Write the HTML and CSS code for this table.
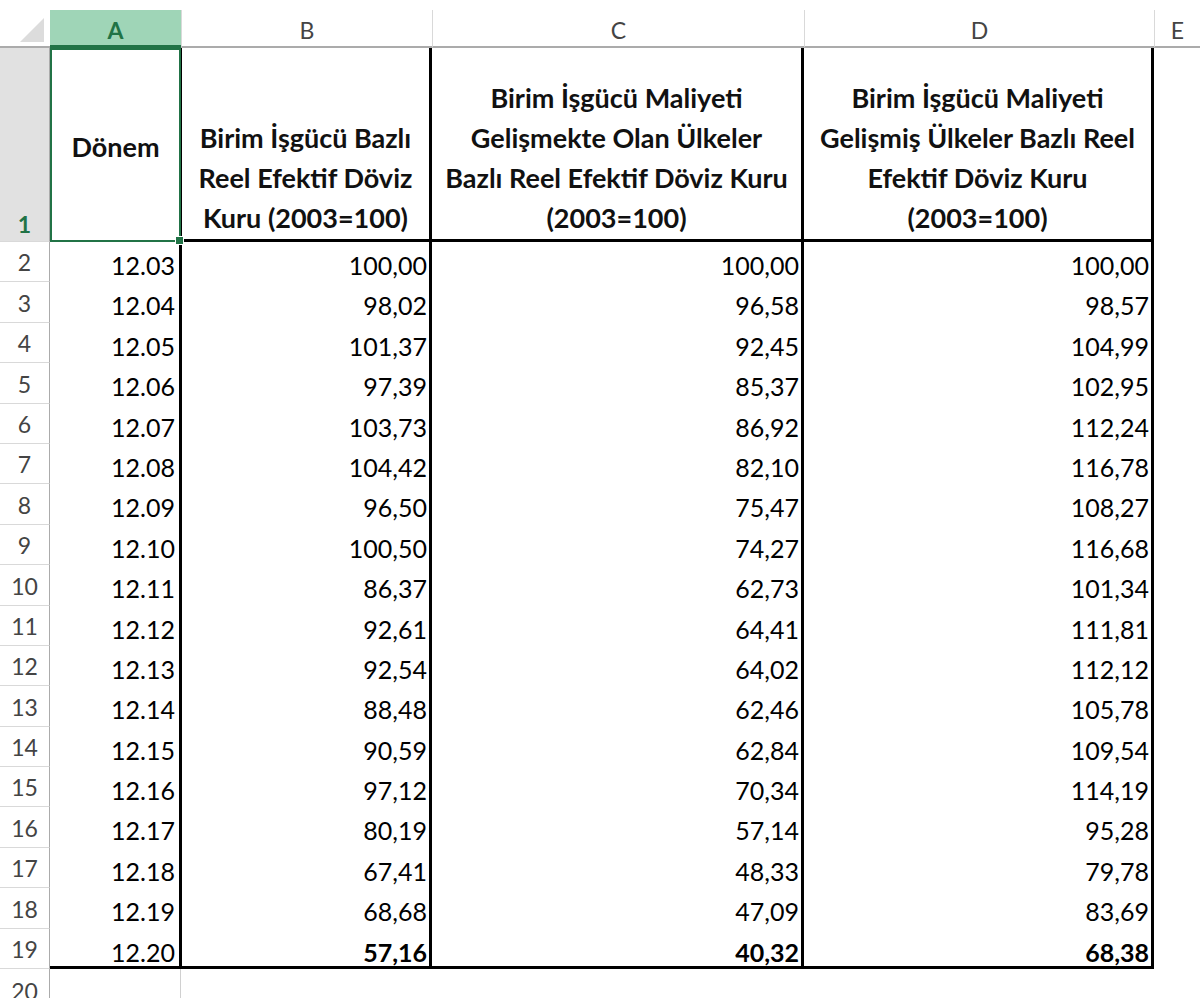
FILE: index.html
```html
<!DOCTYPE html>
<html lang="tr">
<head>
<meta charset="utf-8">
<title>Birim İşgücü Bazlı Reel Efektif Döviz Kuru</title>
<link rel="stylesheet" href="styles.css">
</head>
<body>
<div class="sheet">
  <div class="corner"><div class="tri"></div></div>
  <div class="colhdr sel">A</div>
  <div class="colhdr">B</div>
  <div class="colhdr">C</div>
  <div class="colhdr">D</div>
  <div class="colhdr last">E</div>

  <div class="rowhdr rsel">1</div>
  <div class="hcell a1">Dönem<span class="handle"></span></div>
  <div class="hcell tb">Birim İşgücü Bazlı<br>Reel Efektif Döviz<br>Kuru (2003=100)</div>
  <div class="hcell tc">Birim İşgücü Maliyeti<br>Gelişmekte Olan Ülkeler<br>Bazlı Reel Efektif Döviz Kuru<br>(2003=100)</div>
  <div class="hcell tc">Birim İşgücü Maliyeti<br>Gelişmiş Ülkeler Bazlı Reel<br>Efektif Döviz Kuru<br>(2003=100)</div>
  <div class="ecell"></div>

  <div class="rowhdr">2</div><div class="cell ca">12.03</div><div class="cell cb">100,00</div><div class="cell cc">100,00</div><div class="cell cc">100,00</div><div class="ecell"></div>
  <div class="rowhdr">3</div><div class="cell ca">12.04</div><div class="cell cb">98,02</div><div class="cell cc">96,58</div><div class="cell cc">98,57</div><div class="ecell"></div>
  <div class="rowhdr">4</div><div class="cell ca">12.05</div><div class="cell cb">101,37</div><div class="cell cc">92,45</div><div class="cell cc">104,99</div><div class="ecell"></div>
  <div class="rowhdr">5</div><div class="cell ca">12.06</div><div class="cell cb">97,39</div><div class="cell cc">85,37</div><div class="cell cc">102,95</div><div class="ecell"></div>
  <div class="rowhdr">6</div><div class="cell ca">12.07</div><div class="cell cb">103,73</div><div class="cell cc">86,92</div><div class="cell cc">112,24</div><div class="ecell"></div>
  <div class="rowhdr">7</div><div class="cell ca">12.08</div><div class="cell cb">104,42</div><div class="cell cc">82,10</div><div class="cell cc">116,78</div><div class="ecell"></div>
  <div class="rowhdr">8</div><div class="cell ca">12.09</div><div class="cell cb">96,50</div><div class="cell cc">75,47</div><div class="cell cc">108,27</div><div class="ecell"></div>
  <div class="rowhdr">9</div><div class="cell ca">12.10</div><div class="cell cb">100,50</div><div class="cell cc">74,27</div><div class="cell cc">116,68</div><div class="ecell"></div>
  <div class="rowhdr">10</div><div class="cell ca">12.11</div><div class="cell cb">86,37</div><div class="cell cc">62,73</div><div class="cell cc">101,34</div><div class="ecell"></div>
  <div class="rowhdr">11</div><div class="cell ca">12.12</div><div class="cell cb">92,61</div><div class="cell cc">64,41</div><div class="cell cc">111,81</div><div class="ecell"></div>
  <div class="rowhdr">12</div><div class="cell ca">12.13</div><div class="cell cb">92,54</div><div class="cell cc">64,02</div><div class="cell cc">112,12</div><div class="ecell"></div>
  <div class="rowhdr">13</div><div class="cell ca">12.14</div><div class="cell cb">88,48</div><div class="cell cc">62,46</div><div class="cell cc">105,78</div><div class="ecell"></div>
  <div class="rowhdr">14</div><div class="cell ca">12.15</div><div class="cell cb">90,59</div><div class="cell cc">62,84</div><div class="cell cc">109,54</div><div class="ecell"></div>
  <div class="rowhdr">15</div><div class="cell ca">12.16</div><div class="cell cb">97,12</div><div class="cell cc">70,34</div><div class="cell cc">114,19</div><div class="ecell"></div>
  <div class="rowhdr">16</div><div class="cell ca">12.17</div><div class="cell cb">80,19</div><div class="cell cc">57,14</div><div class="cell cc">95,28</div><div class="ecell"></div>
  <div class="rowhdr">17</div><div class="cell ca">12.18</div><div class="cell cb">67,41</div><div class="cell cc">48,33</div><div class="cell cc">79,78</div><div class="ecell"></div>
  <div class="rowhdr">18</div><div class="cell ca">12.19</div><div class="cell cb">68,68</div><div class="cell cc">47,09</div><div class="cell cc">83,69</div><div class="ecell"></div>
  <div class="rowhdr">19</div><div class="cell ca lastrow">12.20</div><div class="cell cb lastrow bold">57,16</div><div class="cell cc lastrow bold">40,32</div><div class="cell cc lastrow bold">68,38</div><div class="ecell"></div>

  <div class="rowhdr r20">20</div><div class="gcell ga"></div><div class="gcell"></div><div class="gcell"></div><div class="gcell"></div><div class="gcell"></div>
</div>
</body>
</html>
```
FILE: styles.css
```css
html, body {
  margin: 0;
  padding: 0;
  background: #ffffff;
}

body {
  padding-top: 10px;
  font-family: "Lato", "Liberation Sans", sans-serif;
  color: #000;
  overflow: hidden;
}

.sheet {
  display: grid;
  grid-template-columns: 50px 131px 251px 372px 350px 1fr;
  grid-template-rows: 38px 194px repeat(18, 40.4px) 40px;
}

.corner {
  border-bottom: 2px solid #ababab;
  display: flex;
  align-items: flex-end;
  justify-content: flex-end;
  padding: 0 6px 4px 0;
  box-sizing: border-box;
}

.tri {
  width: 24px;
  height: 24px;
  background: #dcdcdc;
  clip-path: polygon(100% 0, 100% 100%, 0 100%);
}

.colhdr {
  box-sizing: border-box;
  border-bottom: 2px solid #ababab;
  border-left: 1px solid #d9d9d9;
  display: flex;
  align-items: center;
  justify-content: center;
  font-size: 23px;
  color: #444;
  padding-top: 4px;
}

.colhdr.sel {
  background: #9fd5b7;
  color: #217346;
  font-weight: bold;
  border-left: none;
  border-bottom: 3px solid #217346;
}

.rowhdr {
  box-sizing: border-box;
  border-right: 1px solid #ababab;
  border-bottom: 1px solid #d9d9d9;
  display: flex;
  align-items: flex-end;
  justify-content: center;
  font-size: 23px;
  color: #444;
  padding-bottom: 5px;
}

.rowhdr.rsel {
  background: #e1e1e1;
  color: #217346;
  font-weight: bold;
  padding-bottom: 3px;
}

.rowhdr.r20 {
  align-items: flex-start;
  padding-bottom: 0;
  padding-top: 8px;
}

.hcell {
  box-sizing: border-box;
  font-weight: bold;
  font-size: 27px;
  line-height: 40px;
  text-align: center;
  white-space: nowrap;
  display: flex;
  align-items: flex-end;
  justify-content: center;
  color: #111;
  border-right: 3px solid #000;
  border-bottom: 3px solid #000;
  padding-bottom: 1px;
}

.hcell.tb {
  border-left: 3px solid #000;
  margin-left: -2px;
}

.hcell.a1 {
  position: relative;
  border: 2px solid #217346;
  align-items: center;
  padding-bottom: 0;
  padding-top: 4px;
}

.handle {
  position: absolute;
  right: -5px;
  bottom: -5px;
  width: 7px;
  height: 7px;
  background: #217346;
  border: 1px solid #fff;
  z-index: 2;
}

.cell {
  box-sizing: border-box;
  font-size: 25px;
  line-height: 40px;
  text-align: right;
  padding-top: 3px;
}

.cell.ca {
  padding-right: 6px;
}

.cell.cb {
  border-left: 3px solid #000;
  border-right: 3px solid #000;
  margin-left: -2px;
  padding-right: 2px;
}

.cell.cc {
  border-right: 3px solid #000;
  padding-right: 2px;
}

.cell.lastrow {
  border-bottom: 3px solid #000;
}

.cell.bold {
  font-weight: bold;
}

.ecell {
  background: #fff;
}

.gcell {
  box-sizing: border-box;
}

.gcell.ga {
  border-right: 1px solid #d0d0d0;
}
```
